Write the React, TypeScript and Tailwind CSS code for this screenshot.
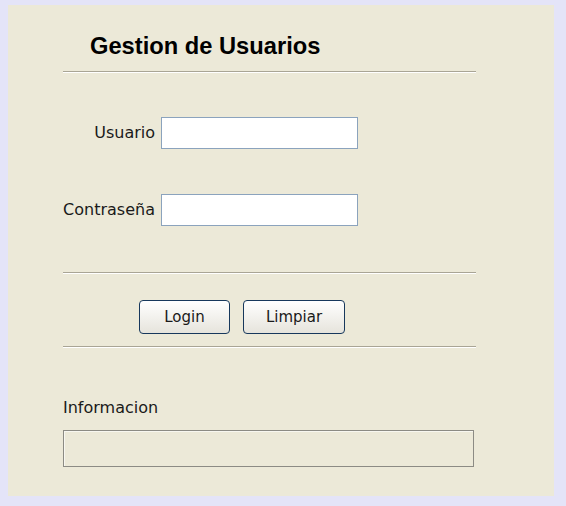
import React, { useState } from "react";

const Separator: React.FC<{ className?: string }> = ({ className = "" }) => (
  <div className={`ml-[55px] w-[413px] border-t border-[#a9a595] border-b border-b-white ${className}`} />
);

const App: React.FC = () => {
  const [usuario, setUsuario] = useState("");
  const [clave, setClave] = useState("");
  const [info, setInfo] = useState("");

  const limpiar = () => {
    setUsuario("");
    setClave("");
    setInfo("");
  };

  return (
    <div className="w-[566px] h-[506px] bg-[#e4e4f8] pt-[5px] pl-[8px] font-['DejaVu_Sans',sans-serif]">
      <div className="w-[546px] h-[491px] bg-[#ece9d8] flex flex-col">
        {/* Titulo */}
        <h1 className="mt-[28px] ml-[82px] h-[27px] leading-[27px] text-[23.7px] font-bold text-black font-['Liberation_Sans',Arial,sans-serif]">
          Gestion de Usuarios
        </h1>
        <Separator className="mt-[11px]" />

        {/* Campos */}
        <div className="mt-[44px] flex items-center">
          <label className="w-[147px] text-right text-[16px] text-[#1a1a1a]">Usuario</label>
          <input
            value={usuario}
            onChange={e => setUsuario(e.target.value)}
            className="ml-[6px] w-[197px] h-[32px] bg-white border border-[#8ba3bd] px-1 text-[14px] outline-none"
          />
        </div>
        <div className="mt-[45px] flex items-center">
          <label className="w-[147px] text-right text-[16px] text-[#1a1a1a]">Contraseña</label>
          <input
            type="password"
            value={clave}
            onChange={e => setClave(e.target.value)}
            className="ml-[6px] w-[197px] h-[32px] bg-white border border-[#8ba3bd] px-1 text-[14px] outline-none"
          />
        </div>

        <Separator className="mt-[46px]" />

        {/* Botones */}
        <div className="mt-[26px] flex">
          <button
            onClick={() => setInfo(usuario ? `Bienvenido ${usuario}` : "Ingrese usuario")}
            className="ml-[131px] w-[91px] h-[34px] rounded-[4px] border border-[#17385c] bg-gradient-to-b from-white to-[#e6e4dc] text-[15px] text-[#1a1a1a]"
          >
            Login
          </button>
          <button
            onClick={limpiar}
            className="ml-[13px] w-[102px] h-[34px] rounded-[4px] border border-[#17385c] bg-gradient-to-b from-white to-[#e6e4dc] text-[15px] text-[#1a1a1a]"
          >
            Limpiar
          </button>
        </div>

        <Separator className="mt-[12px]" />

        {/* Informacion */}
        <div className="mt-[51px] ml-[55px] text-[16px] text-[#1a1a1a] leading-[18px]">Informacion</div>
        <div className="mt-[13px] ml-[55px] w-[411px] h-[37px] border border-[#8c8b84] shadow-[inset_1px_1px_0_#f8f7f0] px-2 text-[14px] leading-[35px] text-[#1a1a1a]">
          {info}
        </div>
      </div>
    </div>
  );
};

export default App;
